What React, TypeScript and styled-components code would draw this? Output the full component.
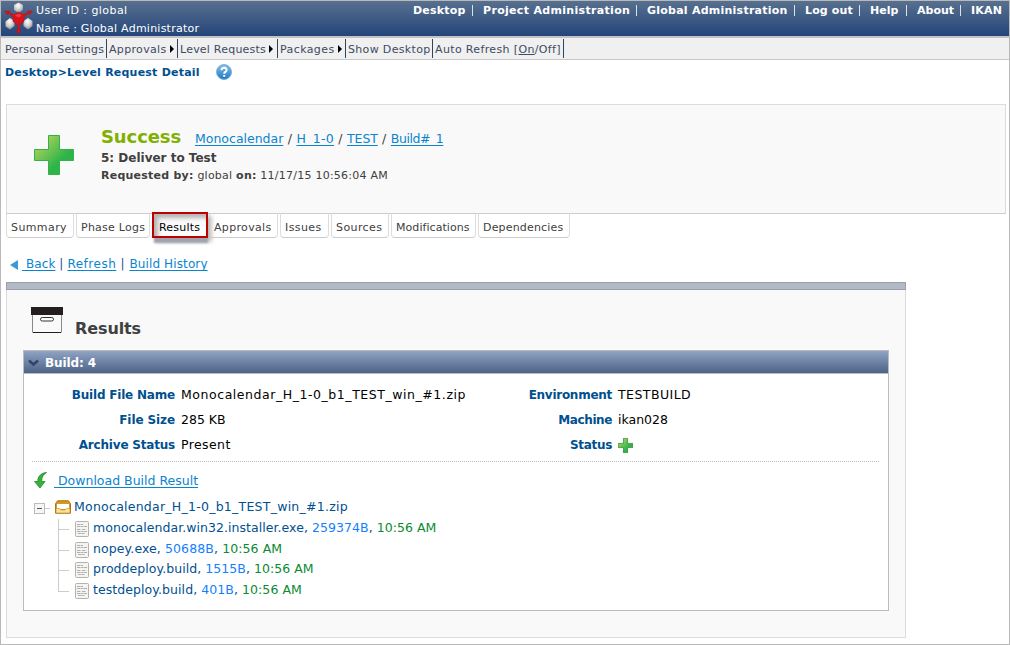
import React from "react";
import styled, { createGlobalStyle } from "styled-components";

const Global = createGlobalStyle`
  * { box-sizing: border-box; }
  body { margin: 0; background: #fff; font-family: "DejaVu Sans", Verdana, sans-serif; font-size: 12px; }
`;

const Label = styled.span<{ $track?: number }>`
  white-space: pre;
  letter-spacing: ${(p) => p.$track ?? 0}px;
`;

const Page = styled.div`
  width: 1010px;
  height: 645px;
  border: 1px solid #b9b9b9;
  background: #fff;
  overflow: hidden;
`;

const Header = styled.header`
  height: 35px;
  display: flex;
  background: linear-gradient(#58708f, #24457a);
  color: #fff;
`;

const LogoBox = styled.div`
  width: 35px;
  height: 35px;
  flex: none;
`;

const UserInfo = styled.div`
  flex: 1;
  font-size: 11px;
  padding-top: 1px;
  line-height: 18px;
  display: flex;
  flex-direction: column;
`;

const TopNav = styled.nav`
  display: flex;
  width: 596px;
  height: 18px;
  line-height: 20px;
  font-size: 11px;
  font-weight: bold;
`;

const TopLink = styled.div<{ $w: number }>`
  width: ${(p) => p.$w}px;
  display: flex;
  justify-content: space-between;
  padding-right: 10px;
`;

const TopBar = styled.i`
  width: 1px;
  height: 11px;
  margin-top: 4px;
  background: #d5e6ea;
`;

const MenuBar = styled.nav`
  height: 24px;
  display: flex;
  padding: 1px 0 0 1px;
  background: #f0f0f0;
  border-top: 2px solid #c3c3c3;
  border-bottom: 1px solid #c9c9c9;
`;

const MenuItem = styled.div<{ $w: number }>`
  width: ${(p) => p.$w}px;
  height: 19px;
  padding: 2px 0 0 2px;
  border-right: 1px solid #2e4460;
  color: #3d4b61;
  font-size: 11px;
  line-height: 18px;
  display: flex;
  align-items: center;
  gap: 3px;

  &:first-child {
    padding-left: 3px;
  }
`;

const MenuArrow = styled.i`
  margin-top: -2px;
  border-left: 4px solid #000;
  border-top: 4px solid transparent;
  border-bottom: 4px solid transparent;
`;

const Crumb = styled.div`
  height: 44px;
  padding: 4px 0 0 4px;
  display: flex;
  align-items: flex-start;
  gap: 16px;
  color: #00508f;
  font-size: 11px;
  font-weight: bold;
  line-height: 18px;
`;

const Hero = styled.section`
  margin: 0 3px 0 5px;
  height: 110px;
  border: 1px solid #dcdcdc;
  border-bottom-color: #ccc;
  background: #f9f9f9;
  display: flex;
  padding: 21px 0 0 27px;
  color: #404040;
`;

const HeroIcon = styled.div`
  width: 67px;
  padding-top: 9px;
`;

const HeroTitle = styled.div`
  height: 23px;
  display: flex;
  align-items: baseline;
  font-size: 12.5px;
  line-height: 21px;
`;

const Success = styled.strong`
  width: 94px;
  font-size: 18px;
  color: #80b000;
`;

const HeroName = styled.div`
  height: 18px;
  line-height: 19px;
  font-size: 12px;
  font-weight: bold;
`;

const HeroMeta = styled.div`
  line-height: 17px;
  font-size: 11px;
`;

const Link = styled.a`
  color: #0a84cf;
  text-decoration: underline;
  text-underline-offset: 2px;
`;

const Tabs = styled.div`
  display: flex;
  padding-left: 5px;
  height: 36px;
`;

const Tab = styled.div<{ $w: number }>`
  width: ${(p) => p.$w}px;
  height: 25px;
  margin: -1px 2px 0 0;
  padding-left: 4px;
  border: 1px solid #ccc;
  border-right-color: #ddd;
  border-left-color: #ddd;
  border-radius: 0 0 4px 4px;
  background: #fff;
  color: #404040;
  font-size: 11px;
  line-height: 28px;
`;

const ActiveTab = styled.div`
  position: relative;
  z-index: 1;
  width: 56px;
  height: 26px;
  margin: -2px 1px 0 0;
  padding-left: 5px;
  border: 2px solid #bd0000;
  background: #fbfbfb;
  box-shadow: inset 4px 4px 4px #b4b4b4, 1px 6px 2px -1px #a0a4ae, 4px 4px 4px #c4c4c4;
  color: #000;
  font-size: 11px;
  line-height: 27px;
`;

const Actions = styled.div`
  height: 32px;
  padding: 5px 0 0 9px;
  display: flex;
  font-size: 12px;
  line-height: 18px;
  color: #2d4a91;
`;

const BackArrow = styled.i`
  margin: 5px 4px 0 0;
  height: 10px;
  border-right: 8px solid #3b9bd0;
  border-top: 5px solid transparent;
  border-bottom: 5px solid transparent;
`;

const Panel = styled.section`
  width: 900px;
  height: 356px;
  margin-left: 5px;
  background: #f9f9f9;
  border: 1px solid #dcdcdc;
  border-top: 0;
`;

const PanelStrip = styled.div`
  height: 8px;
  margin: 0 -1px;
  background: #b2bac8;
  border: 1px solid #989eab;
`;

const PanelTitle = styled.h2`
  margin: 0;
  height: 60px;
  padding: 17px 0 0 24px;
  display: flex;
  gap: 12px;
  font-size: 16px;
  line-height: 43px;
  color: #404040;
`;

const BuildBox = styled.div`
  width: 866px;
  height: 261px;
  margin-left: 16px;
  background: #fff;
  border: 1px solid #bbb;
`;

const BuildHead = styled.div`
  height: 23px;
  padding: 1px 0 0 4px;
  display: flex;
  align-items: center;
  gap: 6px;
  background: linear-gradient(#8fa3c3, #4d6488);
  border-bottom: 1px solid #bbb;
  color: #fff;
  font-size: 12px;
  font-weight: bold;
`;

const Facts = styled.dl`
  margin: 0 9px 0 8px;
  padding-top: 9px;
  height: 88px;
  border-bottom: 1px dotted #bbb;
  display: grid;
  grid-template-columns: 143px 294px 143px 200px;
  grid-auto-rows: 25px;
  font-size: 12px;
  line-height: 25px;
`;

const FactName = styled.dt`
  color: #00508f;
  font-weight: bold;
  text-align: right;
`;

const FactValue = styled.dd`
  margin: 0;
  padding-left: 6px;
  color: #000;
  font-size: 12.5px;
  line-height: 23px;
`;

const StatusValue = styled(FactValue)`
  display: flex;
  align-items: center;
`;

const Download = styled.div`
  height: 35px;
  padding: 10px 0 0 10px;
  display: flex;
  gap: 7px;
  font-size: 12.5px;
  line-height: 18px;
`;

const TreeRoot = styled.div`
  height: 20px;
  padding-left: 10px;
  display: flex;
  align-items: center;
  color: #00508f;
  font-size: 12.5px;
`;

const RootName = styled.div`
  padding: 0 0 2px 3px;
`;

const Tree = styled.div`
  display: flex;
  padding-left: 34px;
`;

const TreeRows = styled.div`
  padding-left: 6px;
`;

const TreeRow = styled.div`
  height: 20.8px;
  display: flex;
  align-items: center;
  gap: 4px;
  font-size: 12.5px;
  color: #00508f;

  svg {
    margin-top: 3px;
  }
`;

const Size = styled.span`
  color: #1480ff;
`;

const Time = styled.span`
  color: #0a8a32;
`;

const Logo = () => (
  <svg width="34" height="35" viewBox="0 0 34 35">
    <defs>
      <radialGradient id="ball" cx=".45" cy=".3" r=".7">
        <stop offset="0" stopColor="#fff" />
        <stop offset=".55" stopColor="#d0d0d0" />
        <stop offset="1" stopColor="#8d8d8d" />
      </radialGradient>
    </defs>
    <path d="M17.500 1.500l4.500 2.500v5l-4.500 3-4.500-3V4z" fill="url(#ball)" />
    <path d="M9 17l4.500 3v5L9 28.500l-4.500-3v-5z" fill="url(#ball)" />
    <path d="M27 17l4.500 3v5l-4.500 3.500-4.500-3.500v-5z" fill="url(#ball)" />
    <path d="M3.500 10h5l-.9 1.400 5.900 2.200 4-2.600 4 2.600 5.900-2.200-.9-1.400h5l-3 4-.8-1.500-4.700 3.700v4.300l-4.300 3.200-.5 5.300h1.700l-2.400 4.500-2.400-4.500h1.700l-.5-5.300-4.300-3.200v-4.300l-4.700-3.700-.8 1.500z" fill="#d6141c" stroke="#a30f16" strokeWidth=".4" />
    <path d="M14 14.500l3.500-2 3.500 2-3.500 2z" fill="#ee3a3e" />
  </svg>
);

const HelpIcon = () => (
  <svg width="16" height="16" viewBox="0 0 16 16">
    <defs>
      <linearGradient id="hg" x2="0" y2="1">
        <stop offset="0" stopColor="#7cc0ec" />
        <stop offset="1" stopColor="#2378c2" />
      </linearGradient>
    </defs>
    <circle cx="8" cy="8" r="7.500" fill="url(#hg)" stroke="#7fb0d6" />
    <path d="M5.500 6.200C5.500 2.800 10.700 3 10.600 6c0 1.800-2.400 1.900-2.400 3.700M8.200 11v1.800" fill="none" stroke="#fff" strokeWidth="2" />
  </svg>
);

const Plus = ({ size }: { size: number }) => (
  <svg width={size} height={size} viewBox="0 0 40 40">
    <defs>
      <linearGradient id={"pg" + size} x2="1" y2="1">
        <stop offset=".15" stopColor="#a9d158" />
        <stop offset=".65" stopColor="#2fb44a" />
      </linearGradient>
    </defs>
    <path
      d="M14.500.5h11v14h14v11h-14v14h-11v-14h-14v-11h14z"
      fill={`url(#pg${size})`}
      stroke={size < 20 ? "#2b8a3c" : "#2fb34a"}
      strokeWidth={size < 20 ? 2 : 1}
    />
  </svg>
);

const BoxIcon = () => (
  <svg width="32" height="26" viewBox="0 0 32 26">
    <path d="M1.500 6v19.500M30.500 6v19.500" stroke="#888" />
    <path d="M2 7h28v18H2z" fill="#fafafa" />
    <path d="M2 25.500h28" stroke="#231f20" />
    <path d="M0 0h32v8H0z" fill="#231f20" />
    <rect x="9.500" y="10.500" width="13" height="3.500" rx="1.750" fill="#fff" stroke="#333" />
  </svg>
);

const DownIcon = () => (
  <svg width="13" height="17" viewBox="0 0 13 17">
    <path d="M12.500.5C7.500 1 3.500 4 3.800 9.500H.5L6 16l5-6.500H7.800C7.500 6 8.800 2.800 12.500.5z" fill="#36b43a" stroke="#1b8a27" strokeWidth=".8" />
  </svg>
);

const Expander = () => (
  <svg width="21" height="14" viewBox="0 0 21 14">
    <rect x=".5" y="3.500" width="10" height="10" fill="#f6f6f6" stroke="#bbb" />
    <path d="M3 8.500h5" stroke="#555" />
    <path d="M11 8.500h5" stroke="#ccc" />
  </svg>
);

const Tray = () => (
  <svg width="16" height="14" viewBox="0 0 16 14">
    <path d="M2.500.8h11l2 3v9.400H.5V3.800z" fill="#d69a24" stroke="#a9741c" />
    <path d="M2 4h12v5H2z" fill="#fff" />
    <path d="M1 8.500h3.500L6 10h4l1.500-1.500H15V13H1z" fill="#ffe08a" stroke="#b98a35" strokeWidth=".6" />
  </svg>
);

const Doc = () => (
  <svg width="14" height="16" viewBox="0 0 14 16">
    <rect x=".5" y=".5" width="13" height="15" rx="1" fill="#f4f4f2" stroke="#b5b2a8" />
    <path d="M2 3.500h6M2 5.500h10M2 8.500h4M7 8.500h4M2 10.500h10M3 12.500h7" stroke="#b0b0b0" strokeDasharray="3 .5" />
  </svg>
);

const Branches = () => (
  <svg width="11" height="84" viewBox="0 0 11 84">
    <path d="M.5 2v72.500M0 12.500h11M0 33.500h11M0 53.500h11M0 74.500h11" stroke="#ccc" fill="none" />
  </svg>
);

const Chevron = () => (
  <svg width="11" height="8" viewBox="0 0 11 8">
    <path d="M1 1.500l4.500 4 4.500-4" stroke="#2e4468" strokeWidth="2.500" fill="none" />
  </svg>
);

const topLinks: [string, number, number][] = [
  ["Desktop", 70, 0.2],
  ["Project Administration", 164, 0.32],
  ["Global Administration", 158, 0.24],
  ["Log out", 65, 0.15],
  ["Help", 47, 0],
  ["About", 54, 0],
  ["IKAN", 38, 0.2],
];

const files: [string, string, string, number][] = [
  ["monocalendar.win32.installer.exe", "259374B", "10:56 AM", 0.05],
  ["nopey.exe", "50688B", "10:56 AM", 0.1],
  ["proddeploy.build", "1515B", "10:56 AM", 0.05],
  ["testdeploy.build", "401B", "10:56 AM", 0.07],
];

export default function App() {
  return (
    <Page>
      <Global />
      <Header>
        <LogoBox><Logo /></LogoBox>
        <UserInfo>
          <Label $track={0.44}>User ID : global</Label>
          <Label $track={0.24}>Name : Global Administrator</Label>
        </UserInfo>
        <TopNav>
          {topLinks.map(([t, w, ls], i) => (
            <TopLink $w={w} key={t}>
              <Label $track={ls}>{t}</Label>
              {i < 6 && <TopBar />}
            </TopLink>
          ))}
        </TopNav>
      </Header>
      <MenuBar>
        <MenuItem $w={105}><Label $track={0.22}>Personal Settings</Label></MenuItem>
        <MenuItem $w={71}><Label $track={0.33}>Approvals</Label><MenuArrow /></MenuItem>
        <MenuItem $w={100}><Label $track={0.22}>Level Requests</Label><MenuArrow /></MenuItem>
        <MenuItem $w={68}><Label $track={0.4}>Packages</Label><MenuArrow /></MenuItem>
        <MenuItem $w={87}><Label $track={0.33}>Show Desktop</Label></MenuItem>
        <MenuItem $w={131}><Label $track={0.36}>Auto Refresh [<u>On</u>/Off]</Label></MenuItem>
      </MenuBar>
      <Crumb>
        <Label $track={0.22}>Desktop&gt;Level Request Detail</Label>
        <HelpIcon />
      </Crumb>
      <Hero>
        <HeroIcon><Plus size={40} /></HeroIcon>
        <div>
          <HeroTitle>
            <Success><Label $track={-0.1}>Success</Label></Success>
            <Link><Label>Monocalendar</Label></Link>
            <Label $track={0.3}> / </Label>
            <Link><Label $track={0.3}>H_1-0</Label></Link>
            <Label $track={0.3}> / </Label>
            <Link><Label $track={-0.1}>TEST</Label></Link>
            <Label $track={0.3}> / </Label>
            <Link><Label $track={-0.45}>Build#_1</Label></Link>
          </HeroTitle>
          <HeroName><Label>5: Deliver to Test</Label></HeroName>
          <HeroMeta><Label $track={0.24}><b>Requested by:</b> global <b>on:</b> 11/17/15 10:56:04 AM</Label></HeroMeta>
        </div>
      </Hero>
      <Tabs>
        <Tab $w={68}><Label $track={0.4}>Summary</Label></Tab>
        <Tab $w={74}><Label $track={0.25}>Phase Logs</Label></Tab>
        <ActiveTab><Label $track={0.2}>Results</Label></ActiveTab>
        <Tab $w={69}><Label $track={0.33}>Approvals</Label></Tab>
        <Tab $w={49}><Label $track={0.4}>Issues</Label></Tab>
        <Tab $w={58}><Label $track={0.4}>Sources</Label></Tab>
        <Tab $w={85}><Label $track={0.06}>Modifications</Label></Tab>
        <Tab $w={92}><Label $track={0.18}>Dependencies</Label></Tab>
      </Tabs>
      <Actions>
        <BackArrow />
        <Label $track={0.1}><Link> Back</Link> | </Label>
        <Label $track={0.5}><Link>Refresh</Link> | </Label>
        <Label $track={0.12}><Link>Build History</Link></Label>
      </Actions>
      <Panel>
        <PanelStrip />
        <PanelTitle><BoxIcon /><Label $track={-0.1}>Results</Label></PanelTitle>
        <BuildBox>
          <BuildHead><Chevron /><Label $track={-0.12}>Build: 4</Label></BuildHead>
          <Facts>
            <FactName><Label $track={-0.2}>Build File Name</Label></FactName>
            <FactValue><Label $track={0.55}>Monocalendar_H_1-0_b1_TEST_win_#1.zip</Label></FactValue>
            <FactName><Label $track={-0.27}>Environment</Label></FactName>
            <FactValue><Label $track={0.45}>TESTBUILD</Label></FactValue>
            <FactName><Label $track={-0.1}>File Size</Label></FactName>
            <FactValue><Label>285 KB</Label></FactValue>
            <FactName><Label $track={-0.4}>Machine</Label></FactName>
            <FactValue><Label>ikan028</Label></FactValue>
            <FactName><Label $track={-0.2}>Archive Status</Label></FactName>
            <FactValue><Label $track={0.4}>Present</Label></FactValue>
            <FactName><Label $track={-0.3}>Status</Label></FactName>
            <StatusValue><Plus size={15} /></StatusValue>
          </Facts>
          <Download><DownIcon /><Link><Label> Download Build Result</Label></Link></Download>
          <TreeRoot><Expander /><Tray /><RootName><Label $track={0.25}>Monocalendar_H_1-0_b1_TEST_win_#1.zip</Label></RootName></TreeRoot>
          <Tree>
            <Branches />
            <TreeRows>
              {files.map(([n, s, t, ls]) => (
                <TreeRow key={n}>
                  <Doc />
                  <Label $track={ls}>{n}, <Size>{s}</Size>, <Time>{t}</Time></Label>
                </TreeRow>
              ))}
            </TreeRows>
          </Tree>
        </BuildBox>
      </Panel>
    </Page>
  );
}
